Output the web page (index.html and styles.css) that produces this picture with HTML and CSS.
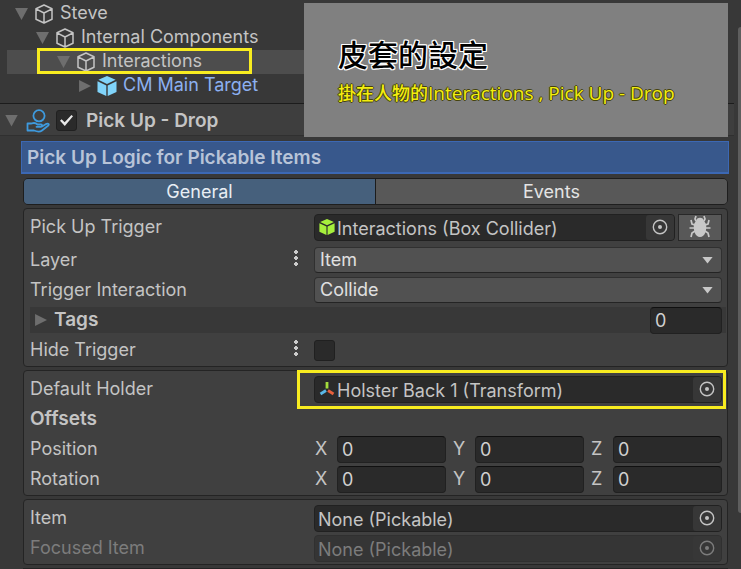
FILE: index.html
```html
<!DOCTYPE html>
<html lang="zh-Hant">
<head>
<meta charset="utf-8">
<title>Pick Up - Drop</title>
<link rel="stylesheet" href="styles.css">
</head>
<body>
<svg class="defs" aria-hidden="true">
  <symbol id="cube" viewBox="0 0 20 20"><path d="M10 1 18 4.8V15.2L10 19 2 15.2V4.8ZM2 4.8 10 9 18 4.8M10 9V19" fill="none" stroke="currentColor" stroke-width="1.5" stroke-linejoin="round"/></symbol>
  <symbol id="solid-cube" viewBox="0 0 20 20"><path d="M10 0 18.6 3.8 10 7.9 1.4 3.8ZM.5 5.2 9.3 9.4V20L.5 16ZM19.5 5.2 10.7 9.4V20L19.5 16Z" fill="currentColor"/></symbol>
  <symbol id="target" viewBox="0 0 16 16"><circle cx="8" cy="8" r="6.7" fill="none" stroke="currentColor" stroke-width="1.4"/><circle cx="8" cy="8" r="2" fill="currentColor"/></symbol>
</svg>
<div class="editor">
  <nav class="tree">
    <div class="node level-1"><button class="fold open" aria-label="Toggle Steve"></button><svg class="cube"><use href="#cube"/></svg><span>Steve</span></div>
    <div class="node level-2"><button class="fold open" aria-label="Toggle Internal Components"></button><svg class="cube"><use href="#cube"/></svg><span>Internal Components</span></div>
    <div class="node level-3 selected"><button class="fold open" aria-label="Toggle Interactions"></button><svg class="cube"><use href="#cube"/></svg><span>Interactions</span><i class="mark mark-node"></i></div>
    <div class="node level-4 prefab"><button class="fold" aria-label="Toggle CM Main Target"></button><svg class="cube"><use href="#solid-cube"/></svg><span>CM Main Target</span></div>
  </nav>

  <header class="component">
    <button class="fold open" aria-label="Toggle component"></button>
    <svg class="hand" viewBox="0 0 24 24"><g fill="none" stroke="#3e9ade" stroke-width="1.8" stroke-linejoin="round" stroke-linecap="round"><circle cx="13" cy="6.8" r="5.6"/><path d="M1.5 14.5H5.5C8 13.5 10 14 11.500 15.500H15C16.500 15.500 16.500 17.800 15 17.800H10.500M16 17.500 20.500 14.800C22.500 14 23.500 15.500 22 16.800L16 21.500C14 23 11 22.700 8 21.500H1.500V14.500"/></g></svg>
    <input type="checkbox" class="check" id="enabled" checked>
    <label for="enabled">Pick Up - Drop</label>
  </header>

  <main class="inspector">
    <h1 class="band">Pick Up Logic for Pickable Items</h1>
    <div class="tabs"><button class="active">General</button><button>Events</button></div>

    <section class="group">
      <div class="row first">
        <label for="trigger">Pick Up Trigger</label>
        <div class="controls">
          <div class="object"><svg class="kind lime"><use href="#solid-cube"/></svg><input id="trigger" value="Interactions (Box Collider)" readonly><button class="pick" aria-label="Select collider"><svg><use href="#target"/></svg></button></div>
          <button class="debug" aria-label="Debug"><svg viewBox="0 0 24 24"><g fill="none" stroke="#c8c8c8" stroke-width="1.700"><path d="M8 6 7 4 8 1M16 6 17 4 16 1M7 10 4 9 3 5M17 10 20 9 21 5M7 13H1.500M17 13H22.500M7 16 4 18 3 22M17 16 20 18 21 22"/></g><path d="M8.500 5C9 2 15 2 15.500 5L18 9C19 15 17 22 12 22S5 15 6 9Z" fill="#c8c8c8"/></svg></button>
        </div>
      </div>
      <div class="row">
        <label for="layer">Layer</label><button class="more" aria-label="Layer options"></button>
        <select id="layer"><option>Item</option></select>
      </div>
      <div class="row">
        <label for="interaction">Trigger Interaction</label>
        <select id="interaction"><option>Collide</option></select>
      </div>
      <div class="row tags">
        <div class="tag-name"><button class="fold" aria-label="Toggle tags"></button><label for="tags">Tags</label></div>
        <input class="number" id="tags" value="0">
      </div>
      <div class="row">
        <label for="hide">Hide Trigger</label><button class="more" aria-label="Hide trigger options"></button>
        <input type="checkbox" class="check" id="hide">
      </div>
    </section>

    <section class="group">
      <div class="row marked">
        <label for="holder">Default Holder</label>
        <div class="object"><svg class="kind" viewBox="0 0 16 16"><g fill="none" stroke-width="2.800"><path d="M8 1V7.500" stroke="#a4dc3c"/><path d="M7 9.500 1.500 13" stroke="#5ab8e8"/><path d="M9 9.500 14.500 13" stroke="#e8603c"/></g></svg><input id="holder" value="Holster Back 1 (Transform)" readonly><button class="pick" aria-label="Select holder"><svg><use href="#target"/></svg></button></div>
        <i class="mark mark-field"></i>
      </div>
      <div class="row"><strong>Offsets</strong></div>
      <div class="row">
        <span>Position</span>
        <div class="vector"><label for="px">X</label><input class="number" id="px" value="0"><label for="py">Y</label><input class="number" id="py" value="0"><label for="pz">Z</label><input class="number" id="pz" value="0"></div>
      </div>
      <div class="row">
        <span>Rotation</span>
        <div class="vector"><label for="rx">X</label><input class="number" id="rx" value="0"><label for="ry">Y</label><input class="number" id="ry" value="0"><label for="rz">Z</label><input class="number" id="rz" value="0"></div>
      </div>
    </section>

    <section class="group">
      <div class="row">
        <label for="item">Item</label>
        <div class="object"><input id="item" value="None (Pickable)" readonly><button class="pick" aria-label="Select item"><svg><use href="#target"/></svg></button></div>
      </div>
      <div class="row disabled">
        <label for="focused">Focused Item</label>
        <div class="object"><input id="focused" value="None (Pickable)" disabled><button class="pick" aria-label="Select focused item" disabled><svg><use href="#target"/></svg></button></div>
      </div>
    </section>
    <section class="group next"></section>
  </main>

  <aside class="caption"><h2>皮套的設定</h2><p>掛在人物的<span>Interactions , Pick Up - Drop</span></p></aside>
  <div class="scrollbar"></div>
</div>
</body>
</html>
```
FILE: styles.css
```css
* { box-sizing: border-box; }
body {
  margin: 0;
  background: #383838;
  color: #c4c4c4;
  font: 18px/24px Inter, "Noto Sans CJK TC", sans-serif;
}
button, input, select { font: inherit; color: inherit; margin: 0; }
button { padding: 0; border: 0; background: none; }
.defs { position: absolute; width: 0; height: 0; }
.editor {
  position: relative;
  display: flex;
  flex-direction: column;
  min-height: 100vh;
  overflow: hidden;
}

/* Hierarchy */
.tree { padding: 2px 13px 5px 7px; }
.node { position: relative; display: flex; align-items: center; height: 24px; }
.node span { line-height: 22px; padding-bottom: 2px; }
.level-1 { padding-left: 8px; }
.level-2 { padding-left: 29px; }
.level-3 { padding-left: 50px; }
.level-4 { padding-left: 71px; }
.selected { background: #4d4d4d; }
.prefab { color: #8cb0f0; }
.cube { width: 20px; height: 20px; margin: 0 6px; }
.prefab .cube { color: #80d4fa; }
.fold { flex: none; width: 13px; height: 12px; background: #6e6e6e; clip-path: polygon(8% 0, 100% 50%, 8% 100%); }
.fold.open { clip-path: polygon(0 0, 100% 0, 50% 100%); }
.mark { position: absolute; border: 3px solid #f8ec20; pointer-events: none; }
.mark-node { left: 30px; top: -2px; width: 215px; height: 26px; }
.mark-field { left: 267px; right: -4px; top: -4px; height: 39px; }

/* Component header */
.component {
  display: flex;
  align-items: center;
  height: 33px;
  margin-right: 7px;
  padding: 2px 0 0 5px;
  border-top: 1px solid #1c1c1c;
  border-bottom: 1px solid #303030;
  background: #3e3e3e;
  font-size: 19px;
  font-weight: 600;
}
.hand { width: 24px; height: 24px; margin: 0 6px 0 8px; }
.component label { margin-left: 9px; }
.check {
  appearance: none;
  width: 21px;
  height: 21px;
  border: 1px solid #202020;
  border-radius: 3px;
  background: #2a2a2a;
}
.check:checked { display: grid; place-items: center; }
.check:checked::before {
  content: "";
  width: 13px;
  height: 11px;
  background: #e8e8e8;
  clip-path: polygon(0 52%, 12% 38%, 36% 66%, 88% 0, 100% 12%, 37% 100%);
}

/* Inspector */
.inspector {
  flex: 1;
  display: flex;
  flex-direction: column;
  gap: 3px;
  padding: 5px 13px 0 23px;
}
.band {
  margin: 0 -1px 1px -2px;
  height: 33px;
  padding: 4px 5px;
  border: 1px solid #3c68b4;
  border-bottom-width: 2px;
  background: #38588c;
  font-size: 19px;
  font-weight: 600;
  line-height: 24px;
  color: #b8c4d8;
}
.tabs {
  display: flex;
  height: 27px;
  border: 1px solid #1e1e1e;
  border-radius: 5px;
  overflow: hidden;
}
.tabs button { flex: 1; background: #585858; color: #e4e4e4; }
.tabs .active { background: #46607c; border-right: 1px solid #1c1c1c; color: #e8eef4; }
.group {
  padding: 3px 5px 1px 6px;
  border: 1px solid #242424;
  border-radius: 4px;
  background: #404040;
}
.next { flex: 1; border-bottom: 0; padding: 0; }
.row {
  position: relative;
  display: grid;
  grid-template-columns: 266px 18px 1fr;
  align-items: center;
  height: 30px;
}
.row > :last-child:not(:first-child), .marked .object { grid-column: 3; grid-row: 1; }
.row > .mark.mark { grid-column: auto; grid-row: auto; }
.first { margin-bottom: 3px; }
.row strong { font-size: 19px; font-weight: 600; }
.controls { display: flex; gap: 3px; }
.controls .object { flex: 1; }
.object {
  display: flex;
  align-items: center;
  min-width: 0;
  height: 27px;
  padding-left: 4px;
  border: 1px solid #212121;
  border-radius: 4px;
  background: #2a2a2a;
}
.object input {
  flex: 1;
  min-width: 0;
  height: 25px;
  padding: 2px 0 0;
  border: 0;
  background: none;
}
.object input:first-child { margin-left: -1px; }
.kind { flex: none; width: 16px; height: 16px; margin-right: 2px; }
.lime { color: #a6f03c; }
.pick { display: grid; place-items: center; width: 28px; height: 25px; border-radius: 3px; background: #373737; }
.pick svg { width: 16px; height: 16px; }
.debug { width: 44px; height: 27px; border: 1px solid #282828; background: #585858; }
.debug svg { display: block; width: 24px; height: 24px; margin: auto; }
select {
  appearance: none;
  width: 100%;
  height: 26px;
  padding: 0 5px;
  border: 1px solid #303030;
  border-bottom-color: #242424;
  border-radius: 4px;
  background: #515151;
  color: #e0e0e0;
}
.row:has(select)::after {
  content: "";
  grid-column: 3;
  grid-row: 1;
  justify-self: end;
  width: 11px;
  height: 7px;
  margin-right: 9px;
  background: #c8c8c8;
  clip-path: polygon(0 0, 100% 0, 50% 100%);
  z-index: 1;
  pointer-events: none;
}
.more {
  width: 4px;
  height: 18px;
  margin: 0 0 4px -2px;
  background: radial-gradient(circle, #cccccc 0 2px, transparent 2px) 0 0 / 4px 6px;
}
.number {
  width: 100%;
  min-width: 0;
  height: 27px;
  padding: 0 4px;
  border: 1px solid #212121;
  border-top-color: #101010;
  border-radius: 4px;
  background: #2a2a2a;
  color: #d0d0d0;
}
.row.tags { grid-template-columns: 1fr 72px; margin-right: -4px; padding-right: 4px; background: linear-gradient(#383838, #383838) no-repeat center / 100% 26px; }
.row.tags > .number { grid-column: 2; }
.tag-name { display: flex; align-items: center; gap: 7px; padding-left: 4px; font-size: 19px; font-weight: 600; }
.vector { display: grid; grid-template-columns: 23px 1fr 29px 1fr 29px 1fr; align-items: center; }
.vector label { padding-left: 7px; }
.vector label:first-child { padding-left: 1px; }
.disabled { color: #7c7c7c; }
.disabled .object { background: #353535; border-color: #303030; }

/* Overlay note */
.caption {
  position: absolute;
  top: 3px;
  right: 13px;
  width: 424px;
  height: 134px;
  padding: 32px 34px;
  background: #808080;
  font-family: "Open Sans", "Noto Sans CJK TC", sans-serif;
}
.caption h2 {
  margin: 0;
  font-size: 30px;
  font-weight: 500;
  line-height: 40px;
  color: #000;
  text-shadow: 1px 0 #fff, -1px 0 #fff, 0 1px #fff, 0 -1px #fff, 1px 1px #fff, -1px -1px #fff, 1px -1px #fff, -1px 1px #fff;
}
.caption p {
  margin: 4px 0 0;
  font-size: 18px;
  font-weight: 500;
  line-height: 28px;
  white-space: nowrap;
  color: #f4ee10;
  text-shadow: 1px 0 #45430c, -1px 0 #45430c, 0 1px #45430c, 0 -1px #45430c;
}
.caption span { font-size: 19px; }
.scrollbar {
  position: absolute;
  top: 27px;
  right: 0;
  width: 3px;
  height: 486px;
  border-radius: 3px 0 0 3px;
  background: #5e5e5e;
}
```
